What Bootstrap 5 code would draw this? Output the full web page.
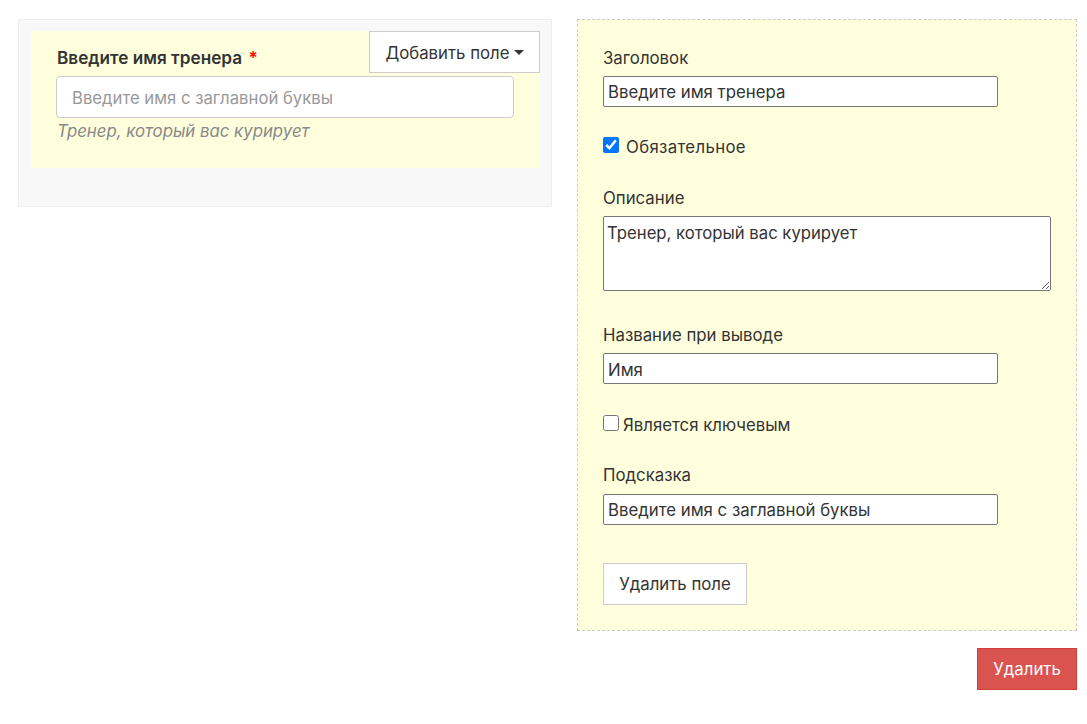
<!DOCTYPE html>
<html lang="ru">
<head>
<meta charset="utf-8">
<title>Конструктор формы</title>
<link href="https://cdn.jsdelivr.net/npm/bootstrap@5.3.0/dist/css/bootstrap.min.css" rel="stylesheet">
<style>
html,body{height:100%;}
body{font-family:Inter,"Noto Sans",sans-serif;font-size:16.8px;color:#333;background:#fff;overflow:hidden;}
.page-wrap{padding:19px 10px 0 18px;gap:25px;align-items:flex-start;}
.left-panel{position:relative;width:534px;height:188px;padding:11px 11px 0 12px;background:#f8f8f8;border:1px solid #eee;}
.left-field{height:137px;background:#ffd;padding:17px 26px 0 25px;}
.preview-label{font-weight:600;font-size:17.2px;line-height:20px;margin-bottom:8px;padding-left:1px;}
.req{color:#f00;margin-left:2px;}
.preview-input{height:42px;border:1px solid #ccc;border-radius:4px;padding:2px 15px 0 15px;font-size:16.7px;color:#333;}
.preview-input::placeholder{color:#999;opacity:1;}
.preview-help{font-style:italic;color:#888;line-height:26px;padding-left:1px;}
.add-btn{position:absolute;top:11px;right:11px;width:171px;height:42px;background:#fff;border:1px solid #ccc;border-radius:0;color:#333;font-size:16.8px;padding:3px 0 0;}
.add-btn.dropdown-toggle::after{border-top-width:5px;border-right-width:5px;border-left-width:5px;margin-left:4px;}
.right-col{width:500px;}
.edit-panel{height:612px;background:#ffd;border:1px dashed #ccc;padding:28px 25px 0;}
.edit-label{display:block;line-height:20px;margin-bottom:8px;}
.edit-label-low{margin-bottom:9px;}
.plain-input{display:block;width:395px;height:31px;border:1px solid #767676;border-radius:2px;padding:0 3px 0 4px;font-size:16.8px;color:#333;background:#fff;}
.plain-input-low{padding-top:2px;}
.plain-area{display:block;width:448px;height:75px;border:1px solid #767676;border-radius:2px;padding:6px 3px 2px;font-size:16.7px;line-height:20px;color:#333;background:#fff;font-family:inherit;}
.chk-row{display:flex;align-items:flex-start;line-height:20px;}
.chk-row input{width:16px;height:16px;margin:2px 0 0;}
.chk-row span{margin-top:2px;}
.chk-a{margin-top:28px;margin-bottom:31px;gap:7px;}
.chk-a span{letter-spacing:.02em;}
.chk-b{margin-top:29px;margin-bottom:30px;gap:4px;}
.gap-desc{margin-bottom:34px;}
.del-field{width:144px;height:42px;background:#fff;border:1px solid #ccc;border-radius:0;color:#333;font-size:16.8px;padding:2px 0 0;margin-top:38px;}
.del-main{width:100px;height:42px;background:#d9534f;border:1px solid #d43f3a;border-radius:0;color:#fff;font-size:16.8px;padding:2px 0 0;margin-top:17px;}
.del-main:hover{background:#c9302c;color:#fff;}
</style>
</head>
<body>
<div class="d-flex page-wrap">
  <div class="left-panel">
    <div class="left-field">
      <div class="preview-label">Введите имя тренера <span class="req">*</span></div>
      <input class="form-control preview-input" type="text" placeholder="Введите имя с заглавной буквы">
      <div class="preview-help">Тренер, который вас курирует</div>
    </div>
    <button class="btn dropdown-toggle add-btn" type="button">Добавить поле</button>
  </div>
  <div class="right-col d-flex flex-column">
    <div class="edit-panel">
      <label class="edit-label">Заголовок</label>
      <input class="plain-input" type="text" value="Введите имя тренера">
      <div class="chk-row chk-a"><input type="checkbox" checked><span>Обязательное</span></div>
      <label class="edit-label">Описание</label>
      <textarea class="plain-area gap-desc">Тренер, который вас курирует</textarea>
      <label class="edit-label">Название при выводе</label>
      <input class="plain-input plain-input-low" type="text" value="Имя">
      <div class="chk-row chk-b"><input type="checkbox"><span>Является ключевым</span></div>
      <label class="edit-label edit-label-low">Подсказка</label>
      <input class="plain-input" type="text" value="Введите имя с заглавной буквы">
      <button class="btn del-field" type="button">Удалить поле</button>
    </div>
    <div class="d-flex justify-content-end"><button class="btn del-main" type="button">Удалить</button></div>
  </div>
</div>
<script src="https://cdn.jsdelivr.net/npm/bootstrap@5.3.0/dist/js/bootstrap.bundle.min.js"></script>
</body>
</html>
